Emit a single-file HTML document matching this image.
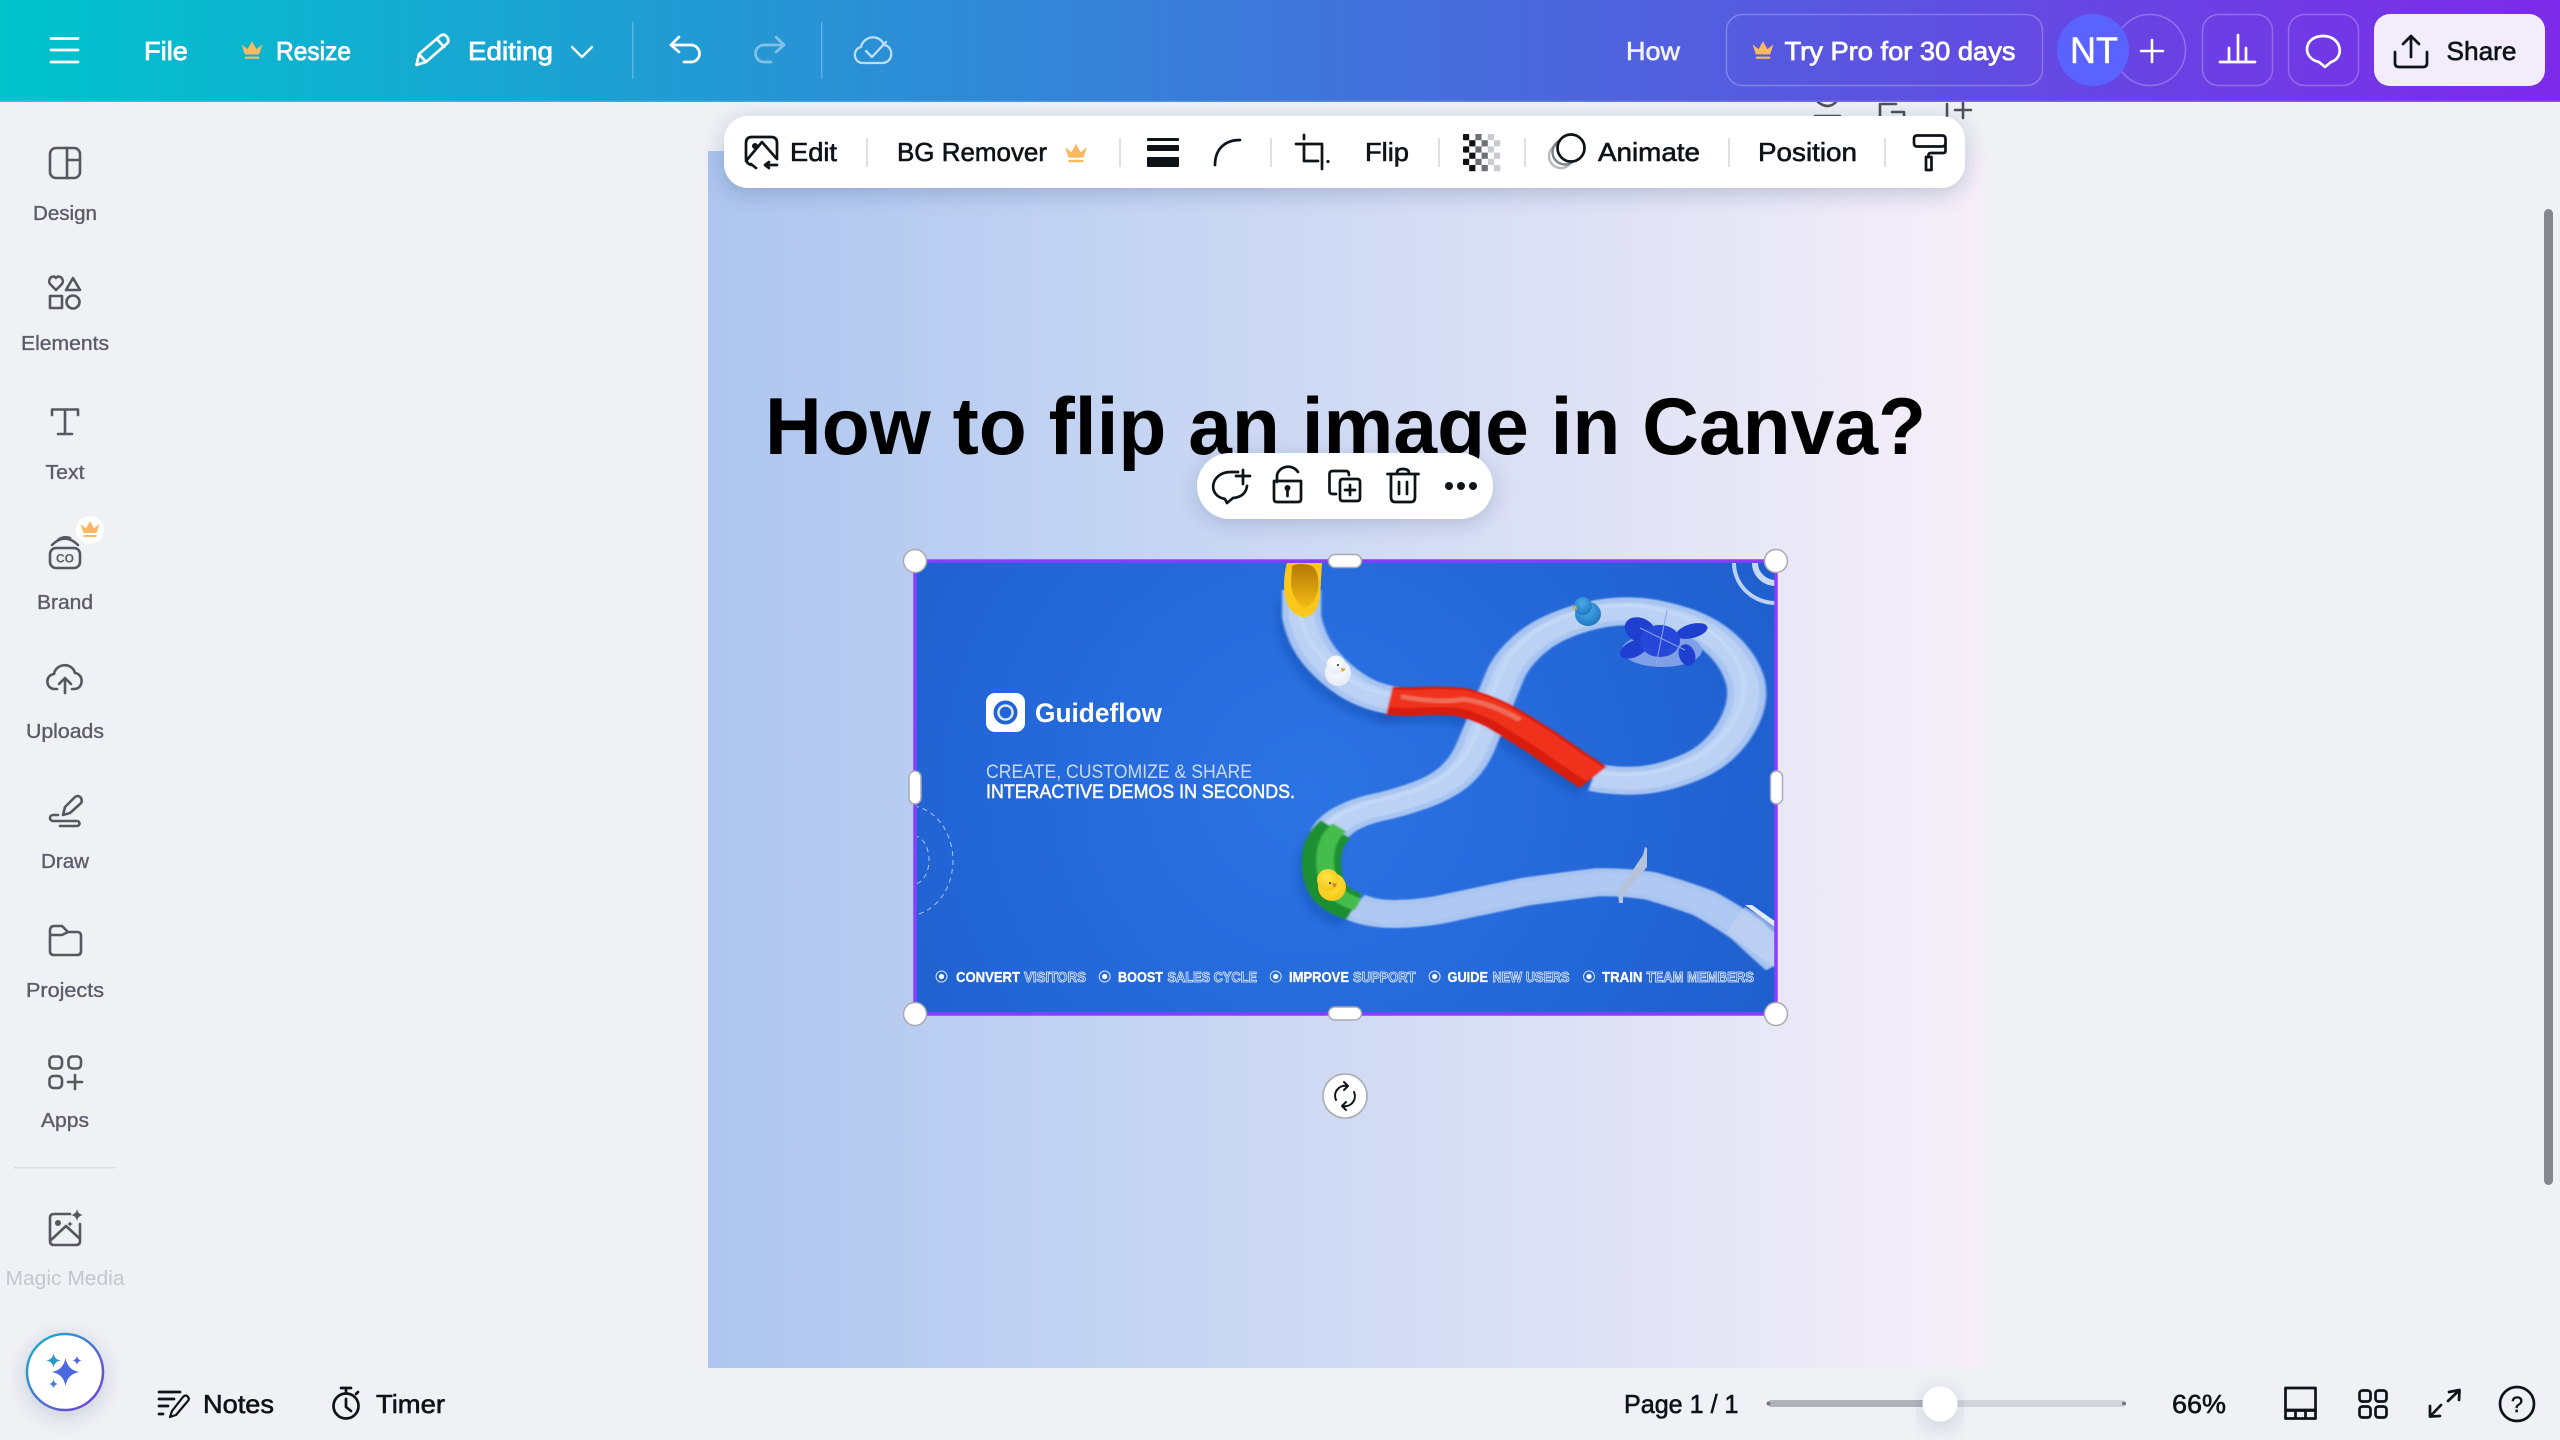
<!DOCTYPE html>
<html lang="en"><head><meta charset="utf-8"><title>How to flip an image in Canva?</title>
<style>
html,body{margin:0;padding:0;width:2560px;height:1440px;overflow:hidden;background:#f0f1f5}
svg{display:block}
text{font-family:"Liberation Sans",sans-serif}
.w{fill:#fff;stroke:#fff;stroke-width:.75;font-size:26px}
.d{fill:#0e1318;stroke:#0e1318;stroke-width:.6;font-size:26px}
.l{fill:#5a5d68;stroke:#5a5d68;stroke-width:.35;font-size:20px;text-anchor:middle}
.is{fill:none;stroke:#55585f;stroke-width:2.6;stroke-linecap:round;stroke-linejoin:round}
.id{fill:none;stroke:#0e1318;stroke-width:2.7;stroke-linecap:round;stroke-linejoin:round}
.iw{fill:none;stroke:#fff;stroke-width:2.7;stroke-linecap:round;stroke-linejoin:round}
.bb{font-size:14.5px;font-weight:bold;fill:#fff;stroke:#fff;stroke-width:.3}
.bo{font-size:14.5px;font-weight:bold;fill:#2a6adb;stroke:#e3edfc;stroke-width:.85}
</style></head><body>
<svg width="2560" height="1440" viewBox="0 0 2560 1440" xmlns="http://www.w3.org/2000/svg">
<defs>
<linearGradient id="hdr" x1="0" x2="1" y1="0" y2="0"><stop offset="0" stop-color="#00c4cc"/><stop offset="1" stop-color="#7d2ae8"/></linearGradient>
<linearGradient id="pg" x1="0" x2="1" y1="0" y2="0"><stop offset="0" stop-color="#aec6ef"/><stop offset=".35" stop-color="#c6d5f3"/><stop offset=".7" stop-color="#dfe2f5"/><stop offset="1" stop-color="#f6eff9"/></linearGradient>
<radialGradient id="img" gradientUnits="userSpaceOnUse" cx="1310" cy="790" r="520"><stop offset="0" stop-color="#2c73e4"/><stop offset=".6" stop-color="#2367d8"/><stop offset="1" stop-color="#1f5ecd"/></radialGradient>
<linearGradient id="ring" x1="0" x2="1" y1="0" y2="1"><stop offset="0" stop-color="#16b6c9"/><stop offset="1" stop-color="#7a35dc"/></linearGradient>
<radialGradient id="duckY" cx=".45" cy=".35" r=".75"><stop offset="0" stop-color="#ffe545"/><stop offset="1" stop-color="#f3c214"/></radialGradient>
<radialGradient id="duckB" cx=".45" cy=".35" r=".75"><stop offset="0" stop-color="#4bacE6"/><stop offset="1" stop-color="#1a70c0"/></radialGradient>
<radialGradient id="duckW" cx=".45" cy=".35" r=".8"><stop offset="0" stop-color="#fff"/><stop offset="1" stop-color="#dfe7f5"/></radialGradient>
<linearGradient id="cup" x1="0" x2="0" y1="0" y2="1"><stop offset="0" stop-color="#b27808"/><stop offset="1" stop-color="#f3bb12"/></linearGradient>
<filter id="sh" x="-10%" y="-30%" width="120%" height="180%"><feDropShadow dx="0" dy="5" stdDeviation="11" flood-color="#26345f" flood-opacity=".24"/></filter>
<filter id="shm" x="-20%" y="-30%" width="140%" height="180%"><feDropShadow dx="0" dy="5" stdDeviation="10" flood-color="#26345f" flood-opacity=".2"/></filter>
<filter id="bl" x="-10%" y="-10%" width="120%" height="120%"><feGaussianBlur stdDeviation="2.500"/></filter>
<filter id="bl2" x="-20%" y="-20%" width="140%" height="140%"><feGaussianBlur stdDeviation="9"/></filter>
<clipPath id="ic"><rect x="915" y="561" width="861" height="453"/></clipPath>
<path id="crown" d="M-9.5-5 L-6.5 4 H6.5 L9.5-5 L4-.8 L0-8 L-4-.8 Z M-6.5 6 H6.5 V8 H-6.5Z"/>
<path id="star" d="M0-1 Q.14-.14 1 0 Q.14 .14 0 1 Q-.14 .14-1 0 Q-.14-.14 0-1Z"/>
</defs>

<rect width="2560" height="1440" fill="#f0f1f5"/>

<!-- page -->
<rect x="708" y="151" width="1275" height="1217" fill="url(#pg)"/>
<text x="765" y="454" font-size="81" font-weight="bold" fill="#000" textLength="1161" lengthAdjust="spacingAndGlyphs">How to flip an image in Canva?</text>

<!-- image -->
<g clip-path="url(#ic)">
<rect x="915" y="561" width="861" height="453" fill="url(#img)"/>
<!-- dashed arcs -->
<path d="M914 806 A45 55 0 0 1 914 915" fill="none" stroke="#a9c5f3" stroke-width="1" stroke-dasharray="5 4"/>
<path d="M914 836 A15 24 0 0 1 914 884" fill="none" stroke="#a9c5f3" stroke-width="1" stroke-dasharray="5 4"/>
<!-- concentric arcs -->
<path d="M1734 563 A42 40 0 0 0 1776 603" fill="none" stroke="#bcd1f4" stroke-width="4"/>
<path d="M1755 563 A21 20 0 0 0 1776 583" fill="none" stroke="#c8d9f6" stroke-width="6"/>
<!-- logo -->
<rect x="986" y="693" width="39" height="39" rx="9" fill="#fff"/>
<circle cx="1005.500" cy="712.500" r="12" fill="#2364d4"/><circle cx="1005.500" cy="712.500" r="8.300" fill="#dbe7fb"/><circle cx="1005.500" cy="712.500" r="5.800" fill="#2364d4"/>
<text x="1035" y="722" font-size="26.500" font-weight="bold" fill="#fff" textLength="127" lengthAdjust="spacingAndGlyphs">Guideflow</text>
<text x="986" y="778" font-size="19" fill="#c9daf6" textLength="266" lengthAdjust="spacingAndGlyphs">CREATE, CUSTOMIZE &amp; SHARE</text>
<text x="986" y="798" font-size="19" fill="#fff" stroke="#fff" stroke-width=".5" textLength="309" lengthAdjust="spacingAndGlyphs">INTERACTIVE DEMOS IN SECONDS.</text>
<!-- bottom row -->
<g fill="none" stroke="#d4e2fa" stroke-width="1"><circle cx="941.500" cy="976.500" r="5.500"/><circle cx="1104.700" cy="976.500" r="5.500"/><circle cx="1275.700" cy="976.500" r="5.500"/><circle cx="1434.600" cy="976.500" r="5.500"/><circle cx="1589" cy="976.500" r="5.500"/></g>
<g fill="#fff"><circle cx="941.500" cy="976.500" r="2.600"/><circle cx="1104.700" cy="976.500" r="2.600"/><circle cx="1275.700" cy="976.500" r="2.600"/><circle cx="1434.600" cy="976.500" r="2.600"/><circle cx="1589" cy="976.500" r="2.600"/></g>
<text class="bb" x="956" y="982" textLength="64" lengthAdjust="spacingAndGlyphs">CONVERT</text>
<text class="bo" x="1024" y="982" textLength="62" lengthAdjust="spacingAndGlyphs">VISITORS</text>
<text class="bb" x="1118" y="982" textLength="45" lengthAdjust="spacingAndGlyphs">BOOST</text>
<text class="bo" x="1167.500" y="982" textLength="89.500" lengthAdjust="spacingAndGlyphs">SALES CYCLE</text>
<text class="bb" x="1289" y="982" textLength="60" lengthAdjust="spacingAndGlyphs">IMPROVE</text>
<text class="bo" x="1353" y="982" textLength="62.500" lengthAdjust="spacingAndGlyphs">SUPPORT</text>
<text class="bb" x="1447.500" y="982" textLength="40.500" lengthAdjust="spacingAndGlyphs">GUIDE</text>
<text class="bo" x="1492.500" y="982" textLength="77" lengthAdjust="spacingAndGlyphs">NEW USERS</text>
<text class="bb" x="1602" y="982" textLength="40.500" lengthAdjust="spacingAndGlyphs">TRAIN</text>
<text class="bo" x="1646.500" y="982" textLength="107.500" lengthAdjust="spacingAndGlyphs">TEAM MEMBERS</text>

<!-- track -->
<g transform="translate(1240 540) scale(.4667 .3333)" fill="none" stroke-linecap="butt" stroke-linejoin="round">
 <defs>
 <path id="tB" d="M757 712 Q811 727 865 720 Q918 712 975 676 Q1030 640 1062 565 Q1094 490 1083 425 Q1070 360 1030 310 Q990 260 934 238 Q880 215 838 214 Q796 213 754 226 Q711 240 673 265 Q635 290 607 330 Q578 370 567 410 Q555 450 538 510 Q520 570 505 620 Q490 670 463 705 Q436 740 387 765 Q337 790 295 802 Q252 815 220 842 Q195 865 190 890"/>
 <path id="tA" d="M132 150 L132 230 Q142 300 171 350 Q200 400 241 437 Q283 475 345 485"/>
 <path id="tC" d="M245 1100 Q280 1122 329 1122 Q394 1122 459 1100 Q535 1078 612 1055 Q688 1040 765 1027 Q822 1025 880 1038 Q937 1060 994 1090 Q1040 1125 1086 1170 Q1116 1210 1160 1265"/>
 <path id="tR" d="M320 482 Q350 487 382 484 Q430 480 474 486 Q510 498 551 525 Q600 565 650 610 Q705 665 757 712"/>
 <path id="tG" d="M205 868 Q178 900 175 950 Q172 1000 185 1040 Q199 1080 245 1100"/>
 </defs>
 <g transform="translate(-14 30)" stroke="#123a96" stroke-opacity=".28" stroke-width="74" filter="url(#bl2)"><use href="#tR"/><use href="#tG"/><use href="#tA"/></g>
 <g filter="url(#bl)">
  <g stroke="#a8c4f0" stroke-width="84"><use href="#tB"/><use href="#tA"/><use href="#tC"/></g>
  <g stroke="#bbd2f5" stroke-width="54"><use href="#tB"/><use href="#tA"/></g>
  <use href="#tC" stroke="#afc9f2" stroke-width="56"/>
  <g stroke="#dbe8fb" stroke-opacity=".35" stroke-width="10" transform="translate(-6 -18)"><use href="#tB"/><use href="#tA"/></g>
  <use href="#tG" stroke="#1b8f30" stroke-width="84"/>
  <use href="#tG" stroke="#45bd4d" stroke-width="38" transform="translate(8 -6)"/>
  <use href="#tR" stroke="#d81e0e" stroke-width="86"/>
  <use href="#tR" stroke="#f0331c" stroke-width="54" transform="translate(4 -8)"/>
  <path d="M345 470 Q420 490 480 478 Q540 490 600 540" stroke="#ee7a66" stroke-width="14" stroke-opacity=".8"/>
 </g>
</g>
<!-- cup -->
<path d="M1287 563 H1322 L1320 598 Q1316 618 1302 617 Q1285 612 1284 588 Q1284 572 1287 563Z" fill="#fbc71c"/>
<path d="M1292 566 Q1300 562 1312 566 Q1320 572 1318 590 Q1314 606 1304 608 Q1293 600 1291 585Z" fill="url(#cup)"/>
<!-- ducks -->
<g>
 <ellipse cx="1338" cy="673" rx="13" ry="13" fill="url(#duckW)"/><circle cx="1336" cy="665" r="9.500" fill="url(#duckW)"/><path d="M1341 668 l5 1 l-4 3z" fill="#d99a25"/><circle cx="1338" cy="665" r="1" fill="#222"/>
 <ellipse cx="1588" cy="614" rx="13" ry="12" fill="url(#duckB)"/><circle cx="1583" cy="606" r="9" fill="url(#duckB)"/><path d="M1572 608 l4-3 l1 5z" fill="#e5a92e"/>
 <ellipse cx="1332" cy="887" rx="14" ry="14" fill="url(#duckY)"/><circle cx="1328" cy="880" r="11" fill="url(#duckY)"/><path d="M1332 883 l5 1 l-3 4z" fill="#e0762a"/><circle cx="1330" cy="883" r="1" fill="#222"/>
</g>
<!-- flower -->
<ellipse cx="1662" cy="650" rx="40" ry="17" fill="#7f9fe6"/>
<g fill="#1f3fd0"><ellipse cx="1640" cy="630" rx="16" ry="12" transform="rotate(25 1640 630)"/><ellipse cx="1692" cy="631" rx="16" ry="7" transform="rotate(-15 1692 631)"/><ellipse cx="1634" cy="649" rx="15" ry="8" transform="rotate(-25 1634 649)"/><ellipse cx="1687" cy="655" rx="8" ry="11" transform="rotate(-20 1687 655)"/></g>
<ellipse cx="1660" cy="641" rx="20" ry="16" fill="#2747d8"/>
<path d="M1667 610 L1656 665 M1640 628 L1685 650" stroke="#8aa6ef" stroke-width="1" fill="none"/>
<!-- gate -->
<path d="M1618 892 L1643 855 L1645 847 L1647 848 L1647 867 L1623 895 L1623 903 L1619 903Z" fill="#b7c3da"/>
<!-- tunnel -->
<path d="M1726 933 L1745 907 L1776 925 L1776 968 Q1750 950 1726 933Z" fill="#c4d4f1" fill-opacity=".6"/>
<path d="M1745 905 L1752 905 L1776 922 L1775 927Z" fill="#e3ebf9"/>
</g>

<!-- selection -->
<rect x="915" y="561" width="861" height="453" fill="none" stroke="#8b3dff" stroke-width="3.500"/>
<g fill="#fff" stroke="#a8a9b1" stroke-width="1.500">
 <circle cx="915" cy="561" r="11.500"/><circle cx="1776" cy="561" r="11.500"/><circle cx="915" cy="1014" r="11.500"/><circle cx="1776" cy="1014" r="11.500"/>
 <rect x="1328.500" y="554.500" width="33" height="13" rx="6.500"/><rect x="1328.500" y="1007" width="33" height="13" rx="6.500"/>
 <rect x="909" y="771" width="12" height="33" rx="6"/><rect x="1770.500" y="771" width="12" height="33" rx="6"/>
 <circle cx="1345" cy="1096" r="22"/>
</g>
<g class="id" style="stroke-width:2"><path d="M1336 1100 A10 10 0 0 1 1347 1086 M1344 1082 L1348 1086 L1344 1090"/><path d="M1354 1092 A10 10 0 0 1 1343 1106 M1346 1110 L1342 1106 L1346 1102"/></g>

<!-- hidden icons behind toolbar -->
<g class="is" style="stroke:#4e5159"><path d="M1818 102 Q1828 110 1836 102 M1815 116 H1840"/><path d="M1882 104 H1896 M1892 112 H1904 V120 M1880 104 V120"/><path d="M1947 104 V124 M1963 102 V118 M1955 110 H1971"/></g>

<!-- header -->
<rect width="2560" height="102" fill="url(#hdr)"/>
<rect y="100.500" width="2560" height="1.500" fill="#fff" fill-opacity=".14"/>
<path class="iw" d="M51 38.500 H78 M51 50 H78 M51 62 H78"/>
<text class="w" x="144" y="60" textLength="44" lengthAdjust="spacingAndGlyphs">File</text>
<use href="#crown" transform="translate(252 50) scale(1.100)" fill="#f8b962"/>
<text class="w" x="276" y="60" textLength="75" lengthAdjust="spacingAndGlyphs">Resize</text>
<path class="iw" d="M416.500 65 L419 54 L440 36 Q444 33 447 37 Q450 41 446.500 44 L426 62 Z M419 54 L426 62 M437 39 L444 47"/>
<text class="w" x="468" y="60" textLength="85" lengthAdjust="spacingAndGlyphs">Editing</text>
<path class="iw" d="M572 47 L582 57 L592 47" style="stroke-width:2.300"/>
<rect x="632" y="22" width="1.500" height="57" fill="#fff" fill-opacity=".25"/>
<path class="iw" d="M679 37 L671 45 L679 52 M671 45 H691 A8.500 8.500 0 0 1 691 62 H684"/>
<path class="iw" d="M776 37 L784 45 L776 52 M784 45 H764 A8.500 8.500 0 0 0 764 62 H771" opacity=".42"/>
<rect x="821" y="22" width="1.500" height="57" fill="#fff" fill-opacity=".25"/>
<path class="iw" d="M863 63 C853 63 852 49 861 47 C864 35 880 34 884 45 C894 46 894 63 882 63 Z M866 51 L872 57 L886 42" opacity=".7" style="stroke-width:2.300"/>

<text x="1626" y="60" font-size="26" fill="#fff" fill-opacity=".9" stroke="#fff" stroke-opacity=".9" stroke-width=".6" textLength="54" lengthAdjust="spacingAndGlyphs">How</text>
<rect x="1726.500" y="14.500" width="316" height="71" rx="16" fill="none" stroke="#fff" stroke-opacity=".25" stroke-width="1.500"/>
<use href="#crown" transform="translate(1763 50) scale(1.100)" fill="#f8b962"/>
<text class="w" x="1784.500" y="60" textLength="231" lengthAdjust="spacingAndGlyphs">Try Pro for 30 days</text>
<circle cx="2150" cy="50" r="35.500" fill="none" stroke="#fff" stroke-opacity=".25" stroke-width="1.500"/>
<circle cx="2093" cy="50" r="36" fill="#5a63ff"/>
<text x="2070" y="63" font-size="37" fill="#fff" stroke="#fff" stroke-width=".5" textLength="48" lengthAdjust="spacingAndGlyphs">NT</text>
<path class="iw" d="M2152 40 V62 M2141 51 H2163" style="stroke-width:2.600"/>
<rect x="2202.500" y="14.500" width="70" height="71" rx="16" fill="none" stroke="#fff" stroke-opacity=".25" stroke-width="1.500"/>
<path class="iw" d="M2220 62 H2255 M2229 48 V62 M2238 35 V62 M2246 48 V62"/>
<rect x="2288.500" y="14.500" width="70" height="71" rx="16" fill="none" stroke="#fff" stroke-opacity=".25" stroke-width="1.500"/>
<path class="iw" d="M2319 62 C2301 58 2304 36 2323 36 C2342 36 2345 58 2331 62 L2325 67 Z"/>
<rect x="2374" y="14" width="171" height="72" rx="16" fill="#f2ecfb"/>
<path class="id" d="M2395 52 V63 Q2395 67 2399 67 H2423 Q2427 67 2427 63 V52 M2411 57 V36 M2403 44 L2411 36 L2419 44"/>
<text class="d" x="2446.500" y="60" textLength="70" lengthAdjust="spacingAndGlyphs">Share</text>

<!-- context toolbar -->
<rect x="724" y="116" width="1241" height="72" rx="24" fill="#fff" filter="url(#sh)"/>
<g fill="#dfe0e4"><rect x="866" y="138" width="2" height="29"/><rect x="1119" y="138" width="2" height="29"/><rect x="1270" y="138" width="2" height="29"/><rect x="1438" y="138" width="2" height="29"/><rect x="1524" y="138" width="2" height="29"/><rect x="1728" y="138" width="2" height="29"/><rect x="1884" y="138" width="2" height="29"/></g>
<path class="id" d="M752 165 Q746 164 746 158 V143 Q746 137 752 137 H771 Q777 137 777 143 V159 M746 161 L762 142 L776 158 M756 168 L751 164 M766 165 H777 M769 162 L765 165 L769 168"/><circle cx="755" cy="146" r="3" fill="#0e1318"/>
<text class="d" x="790" y="161" textLength="47" lengthAdjust="spacingAndGlyphs">Edit</text>
<text class="d" x="897" y="161" textLength="150" lengthAdjust="spacingAndGlyphs">BG Remover</text>
<use href="#crown" transform="translate(1076 153) scale(1.150)" fill="#f8b962"/>
<g fill="#0e1318"><rect x="1147" y="138" width="32" height="3" rx="1"/><rect x="1147" y="145" width="32" height="6" rx="1"/><rect x="1147" y="157" width="32" height="10" rx="1"/></g>
<path class="id" d="M1215 165 C1215 148 1226 140 1240 140"/>
<path class="id" d="M1304 135 V139 M1296 144 H1322 V169 M1304 144 V161 H1318"/><circle cx="1328" cy="161.500" r="1.600" fill="#0e1318"/>
<text class="d" x="1365" y="161" textLength="44" lengthAdjust="spacingAndGlyphs">Flip</text>
<g>
<g fill="#111"><rect x="1463" y="134" width="6.200" height="6.200" rx="1"/><rect x="1463" y="146.400" width="6.200" height="6.200" rx="1"/><rect x="1463" y="158.800" width="6.200" height="6.200" rx="1"/><rect x="1469.200" y="140.200" width="6.200" height="6.200"/><rect x="1469.200" y="152.600" width="6.200" height="6.200"/><rect x="1469.200" y="165" width="6.200" height="6.200"/></g>
<g fill="#6d6f75"><rect x="1475.400" y="134" width="6.200" height="6.200"/><rect x="1475.400" y="146.400" width="6.200" height="6.200"/><rect x="1475.400" y="158.800" width="6.200" height="6.200"/><rect x="1481.600" y="140.200" width="6.200" height="6.200"/><rect x="1481.600" y="152.600" width="6.200" height="6.200"/><rect x="1481.600" y="165" width="6.200" height="6.200"/></g>
<g fill="#c9cbd0"><rect x="1487.800" y="134" width="6.200" height="6.200"/><rect x="1487.800" y="146.400" width="6.200" height="6.200"/><rect x="1487.800" y="158.800" width="6.200" height="6.200"/><rect x="1494" y="140.200" width="6.200" height="6.200"/><rect x="1494" y="152.600" width="6.200" height="6.200"/><rect x="1494" y="165" width="6.200" height="6.200"/></g>
</g>
<g fill="none" stroke-width="2.400"><circle cx="1561" cy="156" r="12" stroke="#b9babf"/><circle cx="1565" cy="152" r="12.500" stroke="#7f8086"/><circle cx="1571" cy="148" r="13.500" stroke="#0e1318" stroke-width="2.700" fill="#fff"/></g>
<text class="d" x="1598" y="161" textLength="102" lengthAdjust="spacingAndGlyphs">Animate</text>
<text class="d" x="1758" y="161" textLength="99" lengthAdjust="spacingAndGlyphs">Position</text>
<path class="id" d="M1917 135.500 H1942 Q1945.500 135.500 1945.500 139 V143 Q1945.500 146.500 1942 146.500 H1917 Q1914 146.500 1914 143 V139 Q1914 135.500 1917 135.500Z M1945.500 141 V151 Q1945.500 153 1943 153 H1931 Q1928.500 153 1928.500 155 V157 M1926 157 H1931.500 V170 H1926Z"/>

<!-- mini toolbar -->
<rect x="1197" y="453" width="296" height="66" rx="33" fill="#fff" filter="url(#shm)"/>
<path class="id" d="M1238 472 H1231 C1210 472 1207 496 1225 499 L1227 503 L1233 498 C1242 497 1246 493 1247 486 M1243 470 V484 M1236 476 H1250" />
<path class="id" d="M1277 482 V475 A11.500 11 0 0 1 1298 472 M1274 481 H1301 V499 Q1301 502 1298 502 H1277 Q1274 502 1274 499 Z"/><circle cx="1287.500" cy="488" r="3" fill="#0e1318"/><path class="id" d="M1287.500 489 V496"/>
<path class="id" d="M1336 494 H1333 Q1329.500 494 1329.500 491 V474 Q1329.500 471 1333 471 H1346 Q1349 471 1349 475 M1343 479 H1357 Q1360 479 1360 482 V498 Q1360 501 1357 501 H1343 Q1340 501 1340 498 V482 Q1340 479 1343 479Z M1350 485 V495 M1345 490 H1355"/>
<path class="id" d="M1387.500 474 H1418.500 M1397 473 Q1397 469 1403 469 Q1409 469 1409 473 M1391 475 V497 Q1391 502 1395 502 H1411 Q1415 502 1415 497 V475 M1399 482 V494 M1407 482 V494"/>
<g fill="#0e1318"><circle cx="1449" cy="486" r="4"/><circle cx="1461" cy="486" r="4"/><circle cx="1473" cy="486" r="4"/></g>

<!-- sidebar -->
<rect x="50" y="148" width="30" height="30" rx="6" class="is"/><path class="is" d="M67 148 V178 M67 160 H80"/>
<text class="l" x="65" y="220" textLength="64" lengthAdjust="spacingAndGlyphs">Design</text>
<path class="is" d="M56 290 L50 284 C47 279 53 274 56 278 C59 274 65 279 62 284 Z M66 290 L73 278 L80 290 Z"/><rect x="50" y="296" width="12" height="12" class="is"/><circle cx="73" cy="302" r="6.500" class="is"/>
<text class="l" x="65" y="350" textLength="88" lengthAdjust="spacingAndGlyphs">Elements</text>
<path class="is" d="M52 415 V409.500 H78 V415 M65 410 V434 M58 434 H72"/>
<text class="l" x="65" y="479" textLength="39" lengthAdjust="spacingAndGlyphs">Text</text>
<rect x="50" y="548" width="30" height="20" rx="6" class="is"/><path class="is" d="M52 545 Q65 532 78 545 M58 540 Q63 536 70 538"/>
<text x="65" y="562.500" font-size="12" font-weight="bold" fill="#55585f" text-anchor="middle" textLength="18" lengthAdjust="spacingAndGlyphs">CO</text>
<circle cx="90" cy="530" r="14" fill="#fff"/><use href="#crown" x="90" y="529" fill="#f8b962"/>
<text class="l" x="65" y="609" textLength="56" lengthAdjust="spacingAndGlyphs">Brand</text>
<path class="is" d="M57 689 H55 C45 689 45 675 54 674 C56 663 72 662 75 673 C84 674 84 689 74 689 H72 M65 693 V679 M59 684 L65 678 L71 684"/>
<text class="l" x="65" y="738" textLength="78" lengthAdjust="spacingAndGlyphs">Uploads</text>
<path class="is" d="M63 815 L65 807 L74 798 Q78 794 81 798 Q83 802 80 804 L70 813 Z M58 815 H53 A3 3 0 0 0 53 821 H77 A2.500 2.500 0 0 1 77 826 H60"/>
<text class="l" x="65" y="868" textLength="48" lengthAdjust="spacingAndGlyphs">Draw</text>
<path class="is" d="M50 931 Q50 926 54 926 H62 L68 932 H77 Q81 932 81 936 V951 Q81 955 77 955 H54 Q50 955 50 951 Z M50 935 H62 L68 932"/>
<text class="l" x="65" y="997" textLength="78" lengthAdjust="spacingAndGlyphs">Projects</text>
<rect x="49.500" y="1056.500" width="12.500" height="12" rx="4" class="is"/><rect x="68.500" y="1056.500" width="12.500" height="12" rx="4" class="is"/><rect x="49.500" y="1076" width="12.500" height="12" rx="4" class="is"/><path class="is" d="M75 1075 V1089 M68 1082 H82"/>
<text class="l" x="65" y="1127" textLength="48" lengthAdjust="spacingAndGlyphs">Apps</text>
<rect x="14" y="1167" width="101" height="1.500" fill="#dcdde2"/>
<path class="is" d="M70 1214 H54 Q50 1214 50 1218 V1241 Q50 1245 54 1245 H76 Q80 1245 80 1241 V1224 M51 1240 L66 1226 L79 1238"/><circle cx="58" cy="1223" r="3" fill="#55585f"/><use href="#star" transform="translate(77 1215) scale(6)" fill="#55585f"/><use href="#star" transform="translate(70 1224) scale(3)" fill="#55585f"/>
<text x="65" y="1285" font-size="20" fill="#c4c6cb" text-anchor="middle" textLength="119" lengthAdjust="spacingAndGlyphs">Magic Media</text>

<!-- magic button -->
<circle cx="65" cy="1372" r="38" fill="#fff" stroke="url(#ring)" stroke-width="2.500" filter="url(#shm)"/>
<use href="#star" transform="translate(65.500 1372) scale(14)" fill="#4c68e0"/>
<use href="#star" transform="translate(53.500 1360.500) scale(7)" fill="#2a98c4"/>
<use href="#star" transform="translate(77 1360.500) scale(4.500)" fill="#4c68e0"/>
<use href="#star" transform="translate(53.500 1384) scale(4.500)" fill="#3f80d4"/>

<!-- bottom bar -->
<path class="id" d="M159 1392 H180 M159 1399 H174 M159 1406 H168 M159 1414 H163"/>
<path class="id" d="M170 1417 L172 1411 L183 1397 Q186 1394 188 1397 Q190 1399 187 1402 L176 1415 Z" style="stroke-width:2.200"/>
<text class="d" x="203" y="1413" textLength="71" lengthAdjust="spacingAndGlyphs">Notes</text>
<circle cx="346" cy="1406" r="12.500" class="id"/><path class="id" d="M341 1388 H351 M346 1388 V1393 M346 1399 V1407 L351 1411 M356 1394 L358 1392"/>
<text class="d" x="376" y="1413" textLength="69" lengthAdjust="spacingAndGlyphs">Timer</text>

<text class="d" x="1624" y="1413" textLength="114.500" lengthAdjust="spacingAndGlyphs">Page 1 / 1</text>
<rect x="1768" y="1400" width="357" height="7" rx="3.500" fill="#d2d4da"/>
<rect x="1768" y="1400" width="172" height="7" rx="3.500" fill="#afb2bb"/>
<circle cx="1768.500" cy="1403.500" r="2" fill="#75787f"/><circle cx="2124" cy="1403.500" r="2" fill="#75787f"/>
<circle cx="1940" cy="1404" r="17.500" fill="#fff" filter="url(#shm)"/>
<text class="d" x="2172" y="1413" textLength="54" lengthAdjust="spacingAndGlyphs">66%</text>
<rect x="2285.500" y="1388" width="30" height="22" class="id"/><rect x="2285.500" y="1410.500" width="30" height="8" class="id"/><path class="id" d="M2295.500 1411 V1418 M2305.500 1411 V1418"/>
<g class="id"><rect x="2359.500" y="1390.500" width="11" height="11" rx="3"/><rect x="2375.500" y="1390.500" width="11" height="11" rx="3"/><rect x="2359.500" y="1406.500" width="11" height="11" rx="3"/><rect x="2375.500" y="1406.500" width="11" height="11" rx="3"/></g>
<path class="id" d="M2449 1392 L2459.500 1390 L2459 1400 M2459 1390.500 L2448 1401 M2430 1406 L2430 1416.500 L2440 1416 M2430.500 1416 L2441 1405"/>
<circle cx="2517" cy="1404" r="17" class="id"/>
<text x="2517" y="1412" font-size="22" fill="#0e1318" stroke="#0e1318" stroke-width=".4" text-anchor="middle">?</text>

<!-- scrollbar -->
<rect x="2544" y="209" width="9" height="976" rx="4.500" fill="#85878d"/>
</svg>
</body></html>
